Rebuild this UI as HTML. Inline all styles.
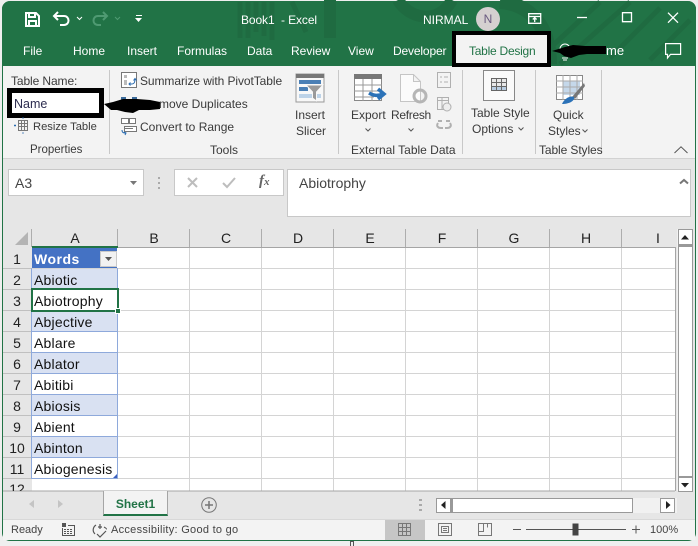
<!DOCTYPE html>
<html><head><meta charset="utf-8"><style>
html,body{margin:0;padding:0;width:698px;height:546px;overflow:hidden;background:#efefef;font-family:"Liberation Sans",sans-serif;color:#333}
#w{position:absolute;left:2px;top:1px;width:694px;height:540px;background:#e6e6e6;border-radius:8px;overflow:hidden;border-right:1px solid #217346;border-left:1px solid #217346;border-bottom:1px solid #217346;box-sizing:border-box}
.a{position:absolute;white-space:nowrap}
.t{position:absolute;white-space:nowrap;font-size:12px;line-height:14px;color:#3a3a3a}
.w{color:#fff;font-size:12px}
.c{position:absolute;white-space:nowrap;font-size:14px;line-height:21px;color:#111;letter-spacing:.2px;margin-top:1px}
.r{position:absolute;left:3px;width:28px;text-align:center;font-size:14px;line-height:21px;color:#222;margin-top:1px}
.h{position:absolute;top:229px;text-align:center;font-size:14px;line-height:18px;color:#222}
svg{position:absolute;overflow:visible}
</style></head><body>
<div id="w"></div>
<!-- green top -->
<div class="a" style="left:2px;top:1px;width:694px;height:65px;background:#217346;border-radius:8px 8px 0 0"></div>
<svg style="left:0;top:0" width="698" height="66" fill="none">
<g stroke="#1f6b41" stroke-width="5"><path d="M240 2v36M248 2v36M256 2v30M264 2v34M272 2v38M292 2l14 30"/><path d="M330 0v38" stroke-width="12"/><path d="M398 0c10 18 40 26 54 0" stroke-width="12"/>
<path d="M500 2c30 2 50 24 50 62" stroke-width="14"/><path d="M600 2l-50 46M630 2l-70 62M660 8l-50 50M690 20l-40 40" /></g>
</svg>
<!-- QAT -->
<svg style="left:25px;top:12px" width="15" height="15" fill="none" stroke="#fff" stroke-width="2"><path d="M1 1h10l3 3v10H1zM4 2v3h6V2M4 14V9h7v5"/></svg>
<svg style="left:53px;top:11px" width="30" height="16" fill="none" stroke="#fff" stroke-width="2"><path d="M2 5h9c6 0 6 9 0 9H7M5 1L1 5l4 4"/><path d="M24 6l2.500 2.500L29 6" stroke-width="1"/></svg>
<svg style="left:92px;top:11px" width="30" height="16" fill="none" stroke="#4f9a72" stroke-width="2"><path d="M14 5H6c-6 0-6 9 0 9h3M11 1l4 4-4 4"/><path d="M23 6l2.500 2.500L28 6" stroke-width="1"/></svg>
<svg style="left:135px;top:15px" width="8" height="9" fill="#fff"><path d="M1 0h6v1H1zM0 3h7L3.500 7z"/></svg>
<div class="t w" style="left:241px;top:13px;letter-spacing:-.1px">Book1&nbsp; -&nbsp;Excel</div>
<div class="t w" style="left:423px;top:13px">NIRMAL</div>
<div class="a" style="left:476px;top:7px;width:24px;height:24px;border-radius:50%;background:#d5d0d0;color:#6a5a80;font-size:12px;line-height:24px;text-align:center">N</div>
<svg style="left:528px;top:12px" width="140" height="16" fill="none" stroke="#fff" stroke-width="1.300"><path d="M.7 1.700h12v9.600H.7zM.7 4.500h12M6.700 10V6M4.800 7.500l1.900-1.900 1.900 1.900"/><path d="M49 5.500h10"/><path d="M94.500 .7h9v9h-9z"/><path d="M140 .7l10 10M150 .7l-10 10"/></svg>
<!-- tabs -->
<div class="t w" style="left:23px;top:44px">File</div>
<div class="t w" style="left:73px;top:44px">Home</div>
<div class="t w" style="left:127px;top:44px">Insert</div>
<div class="t w" style="left:177px;top:44px">Formulas</div>
<div class="t w" style="left:247px;top:44px">Data</div>
<div class="t w" style="left:291px;top:44px">Review</div>
<div class="t w" style="left:348px;top:44px">View</div>
<div class="t w" style="left:393px;top:44px;letter-spacing:-.15px">Developer</div>
<div class="t w" style="left:606px;top:44px;font-size:13px">me</div>
<svg style="left:665px;top:43px" width="17" height="16" fill="none" stroke="#fff" stroke-width="1.200"><path d="M.6.600h15v10.800H5.500L2.500 15v-3.600H.6z"/></svg>
<!-- ribbon -->
<div class="a" style="left:3px;top:66px;width:692px;height:92px;background:#f3f3f3;border-bottom:1px solid #d2d2d2"></div>
<!-- table design tab -->
<div class="a" style="left:452px;top:31px;width:99px;height:36px;background:#f3f3f3;border:4px solid #000;box-sizing:border-box"></div>
<div class="t" style="left:469px;top:44px;color:#217346;letter-spacing:-.25px">Table Design</div>
<svg style="left:551px;top:42px" width="60" height="20"><circle cx="14" cy="7" r="5" fill="none" stroke="#fff"/><path d="M11 16h6M12 18h4" stroke="#fff"/><path d="M1 9L14 5l8-2 12 1h21v8H36l-8 1-8 3-7-2-4-3z" fill="#000"/></svg>
<!-- dividers -->
<div class="a" style="left:109px;top:70px;width:1px;height:84px;background:#c8c8c8"></div>
<div class="a" style="left:338px;top:70px;width:1px;height:84px;background:#c8c8c8"></div>
<div class="a" style="left:462px;top:70px;width:1px;height:84px;background:#c8c8c8"></div>
<div class="a" style="left:535px;top:70px;width:1px;height:84px;background:#c8c8c8"></div>
<div class="a" style="left:601px;top:70px;width:1px;height:84px;background:#c8c8c8"></div>
<!-- properties -->
<div class="t" style="left:11px;top:74px;letter-spacing:-.1px">Table Name:</div>
<div class="a" style="left:7px;top:88px;width:97px;height:30px;background:#fff;border:5px solid #000;box-sizing:border-box"></div>
<div class="t" style="left:14px;top:97px;color:#2d2d50;font-size:12.500px">Name</div>
<svg style="left:103px;top:96px" width="60" height="16" fill="#000"><rect x="18" y="1" width="5" height="3" fill="#3a6a9a"/><rect x="29" y="1" width="5" height="3" fill="#3a6a9a"/><path d="M1 8L10 6l10-3 14 0 13 1 10 2v7l-10 1H36l-6 3-8-1-8-2H8z"/></svg>
<svg style="left:14px;top:117px" width="16" height="17" fill="none" stroke="#777"><path d="M4.500 3.500h9v10h-9zM4.500 6.500h9M4.500 9.500h9M7.500 3.500v10M10.500 3.500v10"/><path d="M9 .5v1M9 15.500v1M0 8.500h2" stroke="#2b6cb0" stroke-width="1.500"/></svg>
<div class="t" style="left:33px;top:120px;font-size:11.200px">Resize Table</div>
<div class="t" style="left:30px;top:143px;font-size:11.500px">Properties</div>
<!-- tools -->
<svg style="left:121px;top:72px" width="16" height="16" fill="none"><path d="M.5.500h15v15H.5z" fill="#fff" stroke="#777"/><path d="M3 3h3v3H3zM3 8h3v5H3z" fill="#bbb"/><path d="M8 12h3c2 0 3-2 3-5M12.500 8.500L14 6.500l1.500 2M9.500 10.500L8 12l1.500 1.500" stroke="#2b6cb0"/></svg>
<div class="t" style="left:140px;top:74px;letter-spacing:-.08px">Summarize with PivotTable</div>
<div class="t" style="left:159px;top:97px">move Duplicates</div>
<svg style="left:121px;top:118px" width="16" height="17" fill="none" stroke="#777"><path d="M.5.500h7v5h-7zM8.500.500h6v5h-6zM3.500 8.500h12v5h-12z" fill="#fff"/><path d="M4 10.500h8"/><path d="M1 12c0 3 2 3 4 3M3 14l2 1-1 2" stroke="#2b6cb0"/></svg>
<div class="t" style="left:140px;top:120px">Convert to Range</div>
<div class="t" style="left:210px;top:143px">Tools</div>
<svg style="left:296px;top:74px" width="28" height="28"><rect width="28" height="28" fill="#f8f8f8" stroke="#999"/><rect width="28" height="4" fill="#777"/><rect x="3" y="6" width="22" height="4" fill="#4a7fb5"/><rect x="3" y="13" width="9" height="4" fill="#4a7fb5"/><rect x="3" y="20" width="22" height="4" fill="#bdd3e8"/><path d="M10 11h17l-6.500 7v9l-4-3v-6z" fill="#9a9a9a" stroke="#f8f8f8"/></svg>
<div class="t" style="left:295px;top:108px">Insert</div>
<div class="t" style="left:296px;top:124px">Slicer</div>
<!-- external -->
<svg style="left:354px;top:74px" width="32" height="32" fill="none"><rect x=".5" y=".5" width="27" height="26" fill="#fff" stroke="#888"/><rect width="28" height="5" fill="#777"/><path d="M0 11h28M0 17h28M0 23h20M9 5v22M18 5v22" stroke="#999"/><path d="M15 19c5 3 9 3 14 1M24 15l6 5-6 5" stroke="#2b72b8" stroke-width="3.500"/></svg>
<div class="t" style="left:351px;top:108px">Export</div>
<svg style="left:365px;top:128px" width="6" height="4" fill="none" stroke="#555"><path d="M.5.500L3 3 5.500.500"/></svg>
<svg style="left:400px;top:74px" width="30" height="30" fill="none" stroke="#c5c5c5"><path d="M.5.500h13l7 7v20H.5zM13.500.500v7h7" fill="#fbfbfb"/><circle cx="20" cy="22" r="6" stroke="#b5b5b5" stroke-width="3"/></svg>
<div class="t" style="left:391px;top:108px;letter-spacing:-.3px">Refresh</div>
<svg style="left:408px;top:128px" width="6" height="4" fill="none" stroke="#555"><path d="M.5.500L3 3 5.500.500"/></svg>
<svg style="left:437px;top:72px" width="15" height="62" fill="none" stroke="#b0b0b0"><path d="M.5.500h13v15H.5zM3 5h2M7 5h4M3 10h2M7 10h4"/><path d="M.5 25.500h11v12H.5zM.5 28.500h11M5 25.500v12"/><circle cx="10" cy="35" r="4" fill="#eee"/><path d="M1 51c-2 3 0 5 3 5h2M13 51c2 3 0 5-3 5H8M1 49h4M9 49h4" stroke-width="2"/></svg>
<div class="t" style="left:351px;top:143px">External Table Data</div>
<!-- style options -->
<div class="a" style="left:483px;top:70px;width:32px;height:31px;background:#fafafa;border:1px solid #888;box-sizing:border-box"></div>
<svg style="left:491px;top:78px" width="16" height="14" fill="none" stroke="#666"><rect x=".5" y=".5" width="15" height="12" fill="#e8e8e8"/><rect x="1" y="9" width="14" height="3" fill="#b8cde2" stroke="none"/><path d="M0 4.500h16M0 8.500h16M5.500 0v13M10.500 0v13"/></svg>
<div class="t" style="left:471px;top:106px">Table Style</div>
<div class="t" style="left:472px;top:122px">Options</div>
<svg style="left:518px;top:127px" width="6" height="4" fill="none" stroke="#555"><path d="M.5.500L3 3 5.500.500"/></svg>
<!-- quick styles -->
<svg style="left:556px;top:75px" width="30" height="30" fill="none"><rect x=".5" y=".5" width="26" height="24" fill="#fff" stroke="#888"/><rect x="7" y="6" width="17" height="14" fill="#c5d8ea"/><path d="M0 6h27M0 12h27M0 18h27M7 0v25M14 0v25M21 0v25" stroke="#aaa"/><path d="M16 22L28 8l1 3-10 13z" fill="#777"/><path d="M6 29c2-5 8-9 12-7 1 4-5 7-12 7z" fill="#2b72b8"/></svg>
<div class="t" style="left:553px;top:108px">Quick</div>
<div class="t" style="left:548px;top:124px">Styles</div>
<svg style="left:582px;top:129px" width="6" height="4" fill="none" stroke="#555"><path d="M.5.500L3 3 5.500.500"/></svg>
<div class="t" style="left:539px;top:143px;letter-spacing:-.1px">Table Styles</div>
<svg style="left:674px;top:146px" width="14" height="8" fill="none" stroke="#555"><path d="M.5 7L7 .8 13.500 7"/></svg>
<!-- formula bar -->
<div class="a" style="left:8px;top:169px;width:136px;height:27px;background:#fff;border:1px solid #c8c8c8;box-sizing:border-box"></div>
<div class="a" style="left:15px;top:175px;font-size:14px;line-height:16px;color:#444">A3</div>
<svg style="left:130px;top:181px" width="8" height="4" fill="#777"><path d="M0 0h7L3.500 4z"/></svg>
<svg style="left:158px;top:177px" width="2" height="12" fill="#aaa"><path d="M0 0h2v2H0zM0 5h2v2H0zM0 10h2v2H0z"/></svg>
<div class="a" style="left:174px;top:169px;width:110px;height:27px;background:#fff;border:1px solid #c8c8c8;box-sizing:border-box"></div>
<svg style="left:187px;top:177px" width="50" height="12" fill="none" stroke="#bdbdbd" stroke-width="2"><path d="M1 1l9 9M10 1l-9 9M36 6l4 4 8-9"/></svg>
<div class="a" style="left:259px;top:173px;font:italic bold 15px 'Liberation Serif',serif;color:#666">f<span style="font-size:11px">x</span></div>
<div class="a" style="left:287px;top:169px;width:404px;height:48px;background:#fff;border:1px solid #c8c8c8;box-sizing:border-box"></div>
<div class="a" style="left:299px;top:175px;font-size:14px;line-height:16px;color:#444">Abiotrophy</div>
<svg style="left:679px;top:178px" width="10" height="7" fill="none" stroke="#777" stroke-width="2"><path d="M1 5.500L5 2l4 3.500"/></svg>
<!-- grid -->
<div class="a" style="left:3px;top:228px;width:672px;height:19px;background:#e6e6e6"></div>
<svg style="left:15px;top:232px" width="14" height="14" fill="#b4b4b4"><path d="M13 0v13H0z"/></svg>
<div class="a" style="left:32px;top:247px;width:643px;height:244px;background:#fff"></div>
<svg style="left:0;top:0" width="698" height="546" fill="none" stroke="#d4d4d4"><path d="M189.500 247v244M261.500 247v244M333.500 247v244M405.500 247v244M477.500 247v244M549.500 247v244M621.500 247v244M32 268.500h643M32 289.500h643M32 310.500h643M32 331.500h643M32 352.500h643M32 373.500h643M32 394.500h643M32 415.500h643M32 436.500h643M32 457.500h643M32 478.500h643"/>
<path d="M117.500 229v18M189.500 229v18M261.500 229v18M333.500 229v18M405.500 229v18M477.500 229v18M549.500 229v18M621.500 229v18M31.500 229v18" stroke="#adadad"/>
<path d="M3 268.500h28M3 289.500h28M3 310.500h28M3 331.500h28M3 352.500h28M3 373.500h28M3 394.500h28M3 415.500h28M3 436.500h28M3 457.500h28M3 478.500h28" stroke="#c0c0c0"/>
<path d="M675.500 247v244M32 247.500h643M3 491h672" stroke="#a5a5a5"/></svg>
<!-- headers -->
<div class="h" style="left:32px;width:86px">A</div>
<div class="h" style="left:118px;width:72px">B</div>
<div class="h" style="left:190px;width:72px">C</div>
<div class="h" style="left:262px;width:72px">D</div>
<div class="h" style="left:334px;width:72px">E</div>
<div class="h" style="left:406px;width:72px">F</div>
<div class="h" style="left:478px;width:72px">G</div>
<div class="h" style="left:550px;width:72px">H</div>
<div class="h" style="left:622px;width:72px">I</div>
<div class="a" style="left:32px;top:246px;width:86px;height:2px;background:#217346"></div>
<div class="r" style="top:248px">1</div><div class="r" style="top:269px">2</div><div class="r" style="top:290px">3</div><div class="r" style="top:311px">4</div><div class="r" style="top:332px">5</div><div class="r" style="top:353px">6</div><div class="r" style="top:374px">7</div><div class="r" style="top:395px">8</div><div class="r" style="top:416px">9</div><div class="r" style="top:437px">10</div><div class="r" style="top:458px">11</div>
<div class="a" style="left:3px;top:479px;width:28px;height:12px;overflow:hidden;text-align:center;font-size:14px;line-height:21px;color:#222">12</div>
<!-- table -->
<div class="a" style="left:32px;top:248px;width:85px;height:20px;background:#4472c4"></div>
<div class="a" style="left:32px;top:269px;width:85px;height:20px;background:#d9e1f2"></div>
<div class="a" style="left:32px;top:311px;width:85px;height:20px;background:#d9e1f2"></div>
<div class="a" style="left:32px;top:353px;width:85px;height:20px;background:#d9e1f2"></div>
<div class="a" style="left:32px;top:395px;width:85px;height:20px;background:#d9e1f2"></div>
<div class="a" style="left:32px;top:437px;width:85px;height:20px;background:#d9e1f2"></div>
<div class="a" style="left:31px;top:268px;width:87px;height:211px;border:1px solid #8ea9db;border-top:0;box-sizing:border-box"></div>
<svg style="left:0;top:0" width="698" height="546" fill="none" stroke="#8ea9db"><path d="M32 289.500h85M32 310.500h85M32 331.500h85M32 352.500h85M32 373.500h85M32 394.500h85M32 415.500h85M32 436.500h85M32 457.500h85"/></svg>
<div class="c" style="left:34px;top:248px;color:#fff;font-weight:bold;letter-spacing:.5px">Words</div>
<div class="a" style="left:100px;top:251px;width:17px;height:16px;background:#f2f2f2;border:1px solid #c9c9c9;box-sizing:border-box"></div>
<svg style="left:105px;top:257px" width="8" height="4" fill="#555"><path d="M0 0h7L3.500 4z"/></svg>
<div class="c" style="left:34px;top:269px">Abiotic</div>
<div class="a" style="left:31px;top:288px;width:88px;height:24px;background:#fff;border:2px solid #217346;box-sizing:border-box"></div>
<div class="a" style="left:115px;top:308px;width:6px;height:6px;background:#217346;border:1px solid #fff;box-sizing:border-box"></div>
<div class="c" style="left:34px;top:290px">Abiotrophy</div>
<div class="c" style="left:34px;top:311px">Abjective</div>
<div class="c" style="left:34px;top:332px">Ablare</div>
<div class="c" style="left:34px;top:353px">Ablator</div>
<div class="c" style="left:34px;top:374px">Abitibi</div>
<div class="c" style="left:34px;top:395px">Abiosis</div>
<div class="c" style="left:34px;top:416px">Abient</div>
<div class="c" style="left:34px;top:437px">Abinton</div>
<div class="c" style="left:34px;top:458px">Abiogenesis</div>
<svg style="left:113px;top:474px" width="4" height="4" fill="#3a5fbf"><path d="M4 0v4H0z"/></svg>
<!-- vertical scroll -->
<div class="a" style="left:677px;top:229px;width:16px;height:262px;background:#f1f1f1"></div>
<div class="a" style="left:678px;top:229px;width:15px;height:16px;background:#fff;border:1px solid #999;box-sizing:border-box"></div>
<svg style="left:681px;top:235px" width="9" height="5" fill="#222"><path d="M0 4.500h8L4 0z"/></svg>
<div class="a" style="left:678px;top:245px;width:15px;height:232px;background:#fff;border:1px solid #999;box-sizing:border-box;border-top-width:2px"></div>
<div class="a" style="left:678px;top:477px;width:15px;height:15px;background:#fff;border:1px solid #999;box-sizing:border-box"></div>
<svg style="left:681px;top:483px" width="9" height="5" fill="#222"><path d="M0 0h8L4 4.500z"/></svg>
<!-- tab bar -->
<svg style="left:29px;top:500px" width="36" height="9" fill="#c4c4c4"><path d="M5 0v8L0 4zM29 0v8l5-4z"/></svg>
<div class="a" style="left:103px;top:491px;width:65px;height:25px;background:#f3f3f3;border-left:1px solid #a5a5a5;border-right:1px solid #a5a5a5;border-bottom:2px solid #217346;box-sizing:border-box;text-align:center;font-size:12px;font-weight:bold;line-height:26px;color:#217346">Sheet1</div>
<svg style="left:201px;top:497px" width="16" height="16" fill="none" stroke="#777"><circle cx="8" cy="8" r="7.300"/><path d="M8 4v8M4 8h8" stroke-width="1.500"/></svg>
<svg style="left:419px;top:499px" width="3" height="12" fill="#aaa"><path d="M0 0h3v2H0zM0 5h3v2H0zM0 10h3v2H0z"/></svg>
<div class="a" style="left:436px;top:498px;width:241px;height:15px;background:#f1f1f1"></div>
<div class="a" style="left:436px;top:498px;width:15px;height:15px;background:#fff;border:1px solid #999;box-sizing:border-box"></div>
<svg style="left:441px;top:501px" width="5" height="9" fill="#222"><path d="M4.500 0v8L0 4z"/></svg>
<div class="a" style="left:451px;top:498px;width:182px;height:15px;background:#fff;border:1px solid #999;border-left-width:2px;box-sizing:border-box"></div>
<div class="a" style="left:660px;top:498px;width:15px;height:15px;background:#fff;border:1px solid #999;box-sizing:border-box"></div>
<svg style="left:666px;top:501px" width="5" height="9" fill="#222"><path d="M0 0v8l4.500-4z"/></svg>
<!-- status -->
<div class="a" style="left:3px;top:519px;width:692px;height:21px;background:#f3f3f3;border-top:1px solid #d8d8d8;box-sizing:border-box"></div>
<div class="t" style="left:11px;top:523px;font-size:11px;color:#444">Ready</div>
<svg style="left:61px;top:523px" width="14" height="13" fill="#555"><path d="M1 0h4v4H1z"/><path d="M7 2h7v11H1V5h1v7h11V3H7z"/><path d="M3 6h2v1H3zM6 6h2v1H6zM9 6h2v1H9zM3 8h2v1H3zM6 8h2v1H6zM9 8h2v1H9zM3 10h2v1H3zM6 10h2v1H6zM9 10h2v1H9z"/></svg>
<svg style="left:92px;top:523px" width="16" height="15" fill="none" stroke="#555" stroke-width="1.200"><path d="M4 2C1 4 0 8 3 11M12 4c1 .5 3 2 2 2M8 1v5M6 4h4M5 11l3 3 6-6"/></svg>
<div class="t" style="left:111px;top:523px;font-size:11px;color:#444;letter-spacing:.28px">Accessibility: Good to go</div>
<div class="a" style="left:385px;top:520px;width:40px;height:20px;background:#c6c6c6"></div>
<svg style="left:398px;top:523px" width="13" height="13" fill="none" stroke="#777"><path d="M.5.500h12v12H.5zM.5 4.500h12M.5 8.500h12M4.500.500v12M8.500.500v12"/></svg>
<svg style="left:438px;top:523px" width="14" height="13" fill="none" stroke="#777"><path d="M.5.500h13v12H.5zM3.500 3.500h7v6h-7zM5 5.500h4M5 7.500h4"/></svg>
<svg style="left:478px;top:523px" width="14" height="13" fill="none" stroke="#777"><path d="M.5.500h13v12H.5zM.5 8.500h5v-8M9.500.500v4"/></svg>
<svg style="left:510px;top:523px" width="130" height="13" fill="none" stroke="#555"><path d="M3 6.500h8M16 6.500h100M122 6.500h8M126 2.500v8"/><rect x="63" y="1" width="5" height="11" fill="#444" stroke="#444"/></svg>
<div class="t" style="left:650px;top:523px;font-size:11px;color:#444">100%</div>
<div class="a" style="left:350px;top:541px;width:4px;height:5px;border:1px solid #555;border-bottom:0;box-sizing:border-box"></div>
</body></html>
